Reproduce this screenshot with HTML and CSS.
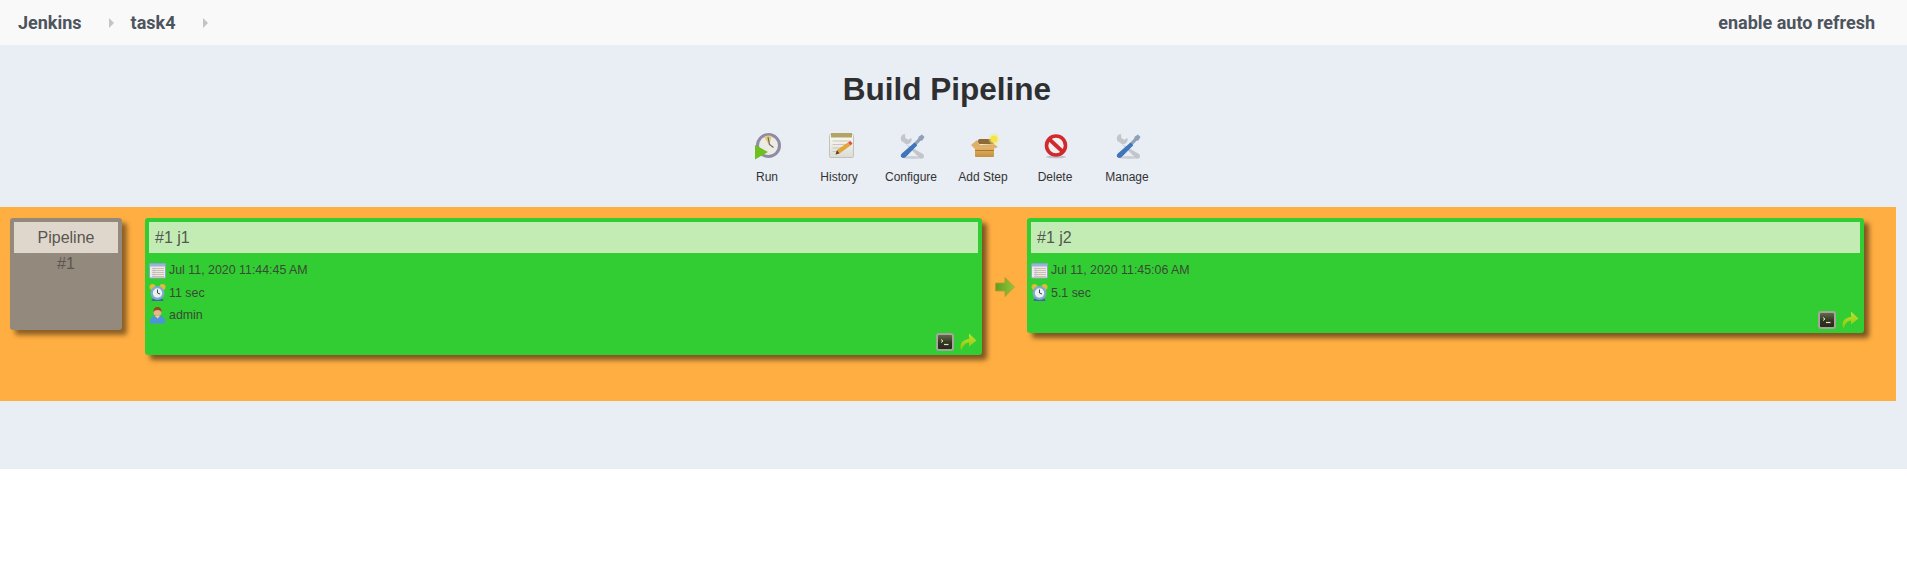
FILE: index.html
```html
<!DOCTYPE html>
<html lang="en">
<head>
  <meta charset="UTF-8">
  <meta name="viewport" content="width=device-width, initial-scale=1.0">
  <title>Build Pipeline</title>
  <link rel="stylesheet" href="styles.css">
</head>
<body>
  <svg class="defs" width="0" height="0">
    <defs>
      <linearGradient id="gGreen" x1="0" y1="0" x2="0" y2="1"><stop offset="0" stop-color="#bfe22c"/><stop offset="1" stop-color="#8cc414"/></linearGradient>
      <linearGradient id="gBox" x1="0" y1="0" x2="0" y2="1"><stop offset="0" stop-color="#e8b566"/><stop offset="1" stop-color="#c48f42"/></linearGradient>
      <linearGradient id="gArrow" x1="0" y1="0" x2="1" y2="0"><stop offset="0" stop-color="#5f9e22"/><stop offset="1" stop-color="#92c83a"/></linearGradient>
      <linearGradient id="gTerm" x1="0" y1="0" x2="0" y2="1"><stop offset="0" stop-color="#6a6e50"/><stop offset=".55" stop-color="#33361f"/><stop offset="1" stop-color="#26281a"/></linearGradient>
      <linearGradient id="gPad" x1="0" y1="0" x2="0" y2="1"><stop offset="0" stop-color="#fbfaf4"/><stop offset="1" stop-color="#dcdcd6"/></linearGradient>
      <symbol id="tools" viewBox="0 0 32 32">
        <ellipse cx="18" cy="27.500" rx="10" ry="1.500" fill="#9aa0a8" opacity=".4"/>
        <path d="M6.500 11c-1.500-3.500-.2-6.500 3.500-7l.3 4 2.700 1.700 3.500-1.800c.8 3.800-2 7-6 6.200L28 24c1.500 1.700 1.300 3.500 0 4.200-1.200.7-2.600.4-3.800-.8L9.500 13z" fill="#c2c6cb"/>
        <path d="M27 4.500l2.500 2.500-2.200 3.500-1.800.3-4.500 4.700-2.200-2.200 4.500-4.700.3-1.800z" fill="#8ea0b8"/>
        <path d="M19.500 12.500l2.800 2.800-11.300 11.500c-1.500 1.600-3.400 1.600-4.500.5s-.9-2.800.6-4.100z" fill="#3f76ba"/>
      </symbol>
      <symbol id="calendar" viewBox="0 0 17 17">
        <rect x=".5" y="1.500" width="16" height="14.500" rx="1" fill="#eceae8" stroke="#8da3c2"/>
        <rect x="1" y="2" width="15" height="2.500" fill="#9ab3d8"/>
        <path d="M3 6.500h12M3 8.500h12M3 10.500h12M3 12.500h12M3 14.500h12" stroke="#cdbcab"/>
        <path d="M5 5.500v9.500" stroke="#b9c6dc"/>
      </symbol>
      <symbol id="clock" viewBox="0 0 17 17">
        <circle cx="3.500" cy="3" r="3" fill="#dfbb3c"/>
        <circle cx="13.500" cy="3" r="3" fill="#dfbb3c"/>
        <path d="M3.500 14.500l-1 2.500h12l-1-2.500z" fill="#3f6a94"/>
        <circle cx="8.500" cy="9" r="7" fill="#7eaad0"/>
        <circle cx="8.500" cy="9" r="4.700" fill="#eef0f0"/>
        <path d="M8.500 5.500V9l2.500 1" fill="none" stroke="#445" stroke-width="1"/>
      </symbol>
      <symbol id="user" viewBox="0 0 17 17">
        <path d="M1 16.500C.5 12 2.500 9.500 5.500 9h6c3 .5 5 3 4.500 7.500z" fill="#4d92dc"/>
        <circle cx="8.500" cy="5" r="4" fill="#e9b48b"/>
        <path d="M4.500 5.500C4 1.500 6.300 0 8.500 0s4.500 1.500 4 5.500C12 3.800 10.500 3 8.500 3S5 3.800 4.500 5.500z" fill="#8a4f1e"/>
        <path d="M6 9l2.500 2.500L11 9z" fill="#f2c9a6"/>
      </symbol>
      <symbol id="terminal" viewBox="0 0 18 18">
        <rect x="1" y="1" width="16" height="16" rx="2" fill="url(#gTerm)" stroke="#a5a59c" stroke-width="2"/>
        <path d="M5 6.500l2 1.500-2 1.500" fill="none" stroke="#e2e2d4" stroke-width="1"/>
        <path d="M8 11.500h4.500" stroke="#e2e2d4" stroke-width="1.200"/>
      </symbol>
      <symbol id="rerun" viewBox="0 0 18 18">
        <path d="M2.500 17.500C-.5 11 4 6.500 10 6V.5L17.500 7.500 10 13.500V9.500C6.500 9.800 4 12.500 2.500 17.500z" fill="url(#gGreen)"/>
      </symbol>
    </defs>
  </svg>

  <header class="topbar">
    <nav class="breadcrumbs">
      <a class="crumb">Jenkins</a>
      <span class="crumb-sep"></span>
      <a class="crumb">task4</a>
      <span class="crumb-sep"></span>
    </nav>
    <a class="crumb">enable auto refresh</a>
  </header>

  <main class="content">
    <h1 class="title">Build Pipeline</h1>

    <ul class="toolbar">
      <li class="tool">
        <svg class="tool-icon" viewBox="0 0 32 32">
          <circle cx="17.500" cy="15.500" r="12.500" fill="#8f8aa6"/>
          <circle cx="17.500" cy="15.500" r="9.500" fill="#ecebe4"/>
          <path d="M13 7a9.500 9.500 0 0 1 8-.8L18 15z" fill="#e6cb7c"/>
          <path d="M17 7l1.500 7.500 4 3" fill="none" stroke="#6a6a6a" stroke-width="1.200"/>
          <path d="M4 15l13 7-13 7.500z" fill="#6dc01e"/>
        </svg>
        <span>Run</span>
      </li>
      <li class="tool">
        <svg class="tool-icon" viewBox="0 0 32 32">
          <rect x="6.500" y="4.500" width="24" height="23" rx="1" fill="url(#gPad)" stroke="#c2c2ba"/>
          <rect x="8" y="3" width="21" height="4.500" fill="#b3a566"/>
          <path d="M9.500 11h18M9.500 14.500h15M9.500 18h9M9.500 21.500h5" stroke="#cac7b8"/>
          <path d="M14 20L25 12.500l2.500 3L16.500 23.500z" fill="#e3a53c"/>
          <path d="M25 12.500l2.500-1.500 2 2.500-2 2z" fill="#d8543e"/>
          <path d="M12.500 24.500L14 20l2.500 3.500z" fill="#5e4220"/>
        </svg>
        <span>History</span>
      </li>
      <li class="tool">
        <svg class="tool-icon"><use href="#tools"/></svg>
        <span>Configure</span>
      </li>
      <li class="tool">
        <svg class="tool-icon" viewBox="0 0 32 32">
          <path d="M9 14l3-5h12l3 5z" fill="#8d6a36"/>
          <path d="M4 15l6-5 3 5 14-1 4 3-5 2H8z" fill="#dcb06a"/>
          <path d="M8 17h19v9a1 1 0 0 1-1 1H9a1 1 0 0 1-1-1z" fill="url(#gBox)"/>
          <path d="M8 20.500h19" stroke="#a97a34"/>
          <circle cx="27" cy="9" r="5.500" fill="#f7ee70" opacity=".45"/>
          <circle cx="27" cy="9" r="3.500" fill="#f4e544"/>
        </svg>
        <span>Add Step</span>
      </li>
      <li class="tool">
        <svg class="tool-icon" viewBox="0 0 32 32">
          <ellipse cx="17" cy="27" rx="10" ry="1.500" fill="#9aa0a8" opacity=".5"/>
          <circle cx="17" cy="15.500" r="9.500" fill="#f4eeee" stroke="#d02a2e" stroke-width="3.600"/>
          <path d="M10 9l14 13" stroke="#d02a2e" stroke-width="3.800"/>
        </svg>
        <span>Delete</span>
      </li>
      <li class="tool">
        <svg class="tool-icon"><use href="#tools"/></svg>
        <span>Manage</span>
      </li>
    </ul>

    <section class="pipeline">
      <div class="revision">
        <div class="revision-head">Pipeline</div>
        <div class="revision-num">#1</div>
      </div>

      <div class="stages">
        <article class="build">
          <div class="build-head">#1 j1</div>
          <div class="build-info"><svg class="info-icon"><use href="#calendar"/></svg>Jul 11, 2020 11:44:45 AM</div>
          <div class="build-info"><svg class="info-icon"><use href="#clock"/></svg>11 sec</div>
          <div class="build-info"><svg class="info-icon"><use href="#user"/></svg>admin</div>
          <div class="build-actions">
            <svg class="action-icon"><use href="#terminal"/></svg>
            <svg class="action-icon"><use href="#rerun"/></svg>
          </div>
        </article>

        <div class="connector">
          <svg class="connector-arrow" viewBox="0 0 20 20">
            <path d="M.5 6h9.500V.5L19.500 10 10 19.500V14H.5z" fill="url(#gArrow)" stroke="#b79a2c" stroke-width=".8"/>
          </svg>
        </div>

        <article class="build">
          <div class="build-head">#1 j2</div>
          <div class="build-info"><svg class="info-icon"><use href="#calendar"/></svg>Jul 11, 2020 11:45:06 AM</div>
          <div class="build-info"><svg class="info-icon"><use href="#clock"/></svg>5.1 sec</div>
          <div class="build-actions">
            <svg class="action-icon"><use href="#terminal"/></svg>
            <svg class="action-icon"><use href="#rerun"/></svg>
          </div>
        </article>
      </div>
    </section>
  </main>
</body>
</html>
```

FILE: styles.css
```css
body, html {
  margin: 0;
  padding: 0;
}
body {
  font-family: "Liberation Sans", Arial, sans-serif;
  background-color: #fff;
  color: #333;
  overflow: hidden;
}
.defs {
  display: block;
  height: 0;
}

/* top bar */
.topbar {
  height: 45px;
  box-sizing: border-box;
  padding: 0 32px 0 18px;
  background-color: #f9f9f9;
  display: flex;
  align-items: center;
  justify-content: space-between;
}
.breadcrumbs {
  display: flex;
  align-items: center;
}
.crumb {
  font-family: Roboto, sans-serif;
  font-weight: 700;
  font-size: 18px;
  color: #4d545d;
}
.crumb-sep {
  width: 0;
  height: 0;
  margin: 0 17px 0 27px;
  border-style: solid;
  border-width: 5px 0 5px 5px;
  border-color: transparent transparent transparent #c4c4c4;
}

/* page body */
.content {
  height: 424px;
  padding-right: 11px;
  background-color: #e9edf4;
  overflow: hidden;
}
.title {
  margin: 25px 0 0;
  padding-right: 2px;
  font-size: 31.5px;
  line-height: 38px;
  font-weight: bold;
  text-align: center;
  color: #2d2f30;
}
.toolbar {
  list-style: none;
  margin: 22px 0 0;
  padding: 0 2px 0 0;
  display: flex;
  justify-content: center;
}
.tool {
  width: 72px;
  display: flex;
  flex-direction: column;
  align-items: center;
  font-size: 12px;
  line-height: 14px;
  color: #333;
}
.tool-icon {
  width: 32px;
  height: 32px;
  margin-bottom: 8px;
}

/* the orange row */
.pipeline {
  margin-top: 23px;
  padding: 11px 32px 46px 10px;
  background-color: #ffae42;
  display: flex;
  align-items: flex-start;
  gap: 23px;
}
.revision {
  width: 112px;
  height: 112px;
  flex: none;
  box-sizing: border-box;
  padding: 4px;
  border-radius: 3px;
  background-color: #94897d;
  box-shadow: 5px 5px 5px rgba(0, 0, 0, .45);
  text-align: center;
  font-size: 16px;
  color: #5a5650;
}
.revision-head {
  height: 31px;
  line-height: 31px;
  background-color: #dfd6cc;
}
.revision-num {
  line-height: 22px;
}
.stages {
  flex: 1;
  display: flex;
  align-items: flex-start;
}
.build {
  flex: 1;
  box-sizing: border-box;
  padding: 4px;
  border-radius: 3px;
  background-color: #32cd32;
  box-shadow: 5px 5px 5px rgba(0, 0, 0, .5);
  font-size: 12.4px;
  color: #3a4a36;
}
.build-head {
  height: 31px;
  line-height: 31px;
  padding-left: 6px;
  margin-bottom: 6px;
  background-color: #c3ecb4;
  font-size: 16px;
  color: #555753;
}
.build-info {
  height: 22.5px;
  display: flex;
  align-items: center;
  gap: 3px;
}
.info-icon {
  width: 17px;
  height: 17px;
  flex: none;
}
.build-actions {
  display: flex;
  justify-content: flex-end;
  gap: 5px;
  height: 18px;
  margin-top: 6.5px;
  padding-right: 1px;
}
.action-icon {
  width: 18px;
  height: 18px;
}
.connector {
  width: 45px;
  height: 137px;
  flex: none;
  display: flex;
  align-items: center;
  justify-content: center;
}
.connector-arrow {
  width: 20px;
  height: 20px;
}
```
